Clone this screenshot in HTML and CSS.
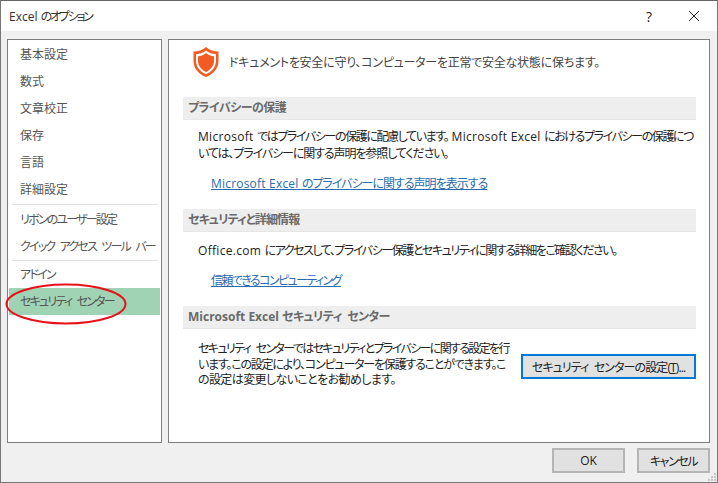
FILE: index.html
```html
<!DOCTYPE html>
<html lang="ja">
<head>
<meta charset="utf-8">
<title>Excel のオプション</title>
<link rel="stylesheet" href="styles.css">
</head>
<body>
<div class="window">
  <header class="titlebar">
    <span class="title">Excel <span class="t-ja">のオプション</span></span>
    <span class="help">?</span>
    <svg class="close" width="12" height="12" viewBox="0 0 12 12"><path d="M1 1L11 11M11 1L1 11" stroke="#222" stroke-width="1" fill="none"/></svg>
  </header>
  <main class="content">
    <nav class="sidebar">
      <div class="item">基本設定</div>
      <div class="item">数式</div>
      <div class="item">文章校正</div>
      <div class="item">保存</div>
      <div class="item">言語</div>
      <div class="item">詳細設定</div>
      <div class="sep"></div>
      <div class="item kana">リボンのユーザー設定</div>
      <div class="item kana">クイック アクセス ツール バー</div>
      <div class="sep sep-tight"></div>
      <div class="item kana">アドイン</div>
      <div class="item kana selected">セキュリティ センター</div>
    </nav>
    <section class="panel">
      <div class="intro">
        <svg class="shield" width="28" height="32" viewBox="0 0 28 32">
          <path d="M14 1C11 4 6 5.500 1.500 5.500V15C1.500 23 7.500 28.500 14 31C20.500 28.500 26.500 23 26.500 15V5.500C22 5.500 17 4 14 1Z" fill="#f25c22"/>
          <path d="M14 4.500C11.500 6.800 7.500 8 4 8.200V15C4 21.500 9 26 14 28.300C19 26 24 21.500 24 15V8.200C20.500 8 16.500 6.800 14 4.500Z" fill="#fff"/>
          <path d="M14 7C12 8.800 9 10 6 10.300V15C6 20.300 10 24 14 26C18 24 22 20.300 22 15V10.300C19 10 16 8.800 14 7Z" fill="#f25c22"/>
        </svg>
        <span class="intro-text">ドキュメントを安全に守り、コンピューターを正常で安全な状態に保ちます。</span>
      </div>
      <h2 class="heading first">プライバシーの保護</h2>
      <p class="para">Microsoft <span class="j-a">ではプライバシーの保護に配慮しています。</span> Microsoft Excel <span class="j-a">におけるプライバシーの保護につ</span><br><span class="j-b">いては、プライバシーに関する声明を参照してください。</span></p>
      <a class="link link-one" href="#">Microsoft Excel <span class="j-c">のプライバシーに関する声明を表示する</span></a>
      <h2 class="heading second">セキュリティと詳細情報</h2>
      <p class="para para-office">Office.com <span class="j-d">にアクセスして、プライバシー保護とセキュリティに関する詳細をご確認ください。</span></p>
      <a class="link link-two" href="#"><span class="j-e">信頼できるコンピューティング</span></a>
      <h2 class="heading third">Microsoft Excel <span class="j-f">セキュリティ センター</span></h2>
      <div class="trust">
        <p class="para trust-text"><span class="j-k">セキュリティ センターではセキュリティとプライバシーに関する設定を行</span><br><span class="j-g">います。この設定により、コンピューターを保護することができます。こ</span><br><span class="j-h">の設定は変更しないことをお勧めします。</span></p>
        <button class="btn trust-btn" type="button"><span class="j-i">セキュリティ センターの設定(<u>T</u>)...</span></button>
      </div>
    </section>
  </main>
  <footer class="footer">
    <button class="btn ok" type="button">OK</button>
    <button class="btn cancel" type="button"><span class="j-a">キャンセル</span></button>
  </footer>
  <svg class="grip" width="10" height="10" viewBox="0 0 10 10"><path d="M7 1h2v2H7zM4 4h2v2H4zM7 4h2v2H7zM1 7h2v2H1zM4 7h2v2H4zM7 7h2v2H7z" fill="#c4c4c4"/></svg>
  <svg class="ellipse" width="124" height="44" viewBox="0 0 124 44"><ellipse cx="62" cy="22" rx="59.500" ry="19.500" fill="none" stroke="#e8101a" stroke-width="2"/></svg>
</div>
</body>
</html>
```
FILE: styles.css
```css
* { box-sizing: border-box; }
html, body { margin: 0; padding: 0; }
body { width: 718px; height: 483px; overflow: hidden; font-family: "Open Sans", "Noto Sans CJK JP", sans-serif; font-size: 12px; color: #222; font-feature-settings: "palt"; }
.window { position: relative; width: 718px; height: 483px; background: #f0f0f0; border: 1px solid #777; border-top-color: #666; display: flex; flex-direction: column; }
.titlebar { height: 30px; background: #fff; display: flex; align-items: center; padding: 0 0 0 8px; flex: none; }
.title { flex: 1; font-size: 12px; color: #333; }
.t-ja { letter-spacing: -2.2px; }
.help { font-size: 14px; color: #222; margin-right: 36px; }
.close { margin-right: 17px; }
.content { display: flex; gap: 6px; padding: 8px 7px 0 6px; height: 412px; flex: none; }
.sidebar { width: 155px; height: 404px; background: #fff; border: 1px solid #7f7f7f; padding: 1px 1px; flex: none; }
.item { height: 27px; line-height: 27px; padding-left: 11px; color: #555; white-space: nowrap; }
.item.kana { letter-spacing: -1.8px; word-spacing: 4px; }
.item.selected { background: #9fd3b4; }
.sep { height: 1px; margin: 1px 2px 1px 3px; background: #e2e2e2; }
.sep-tight { margin: 0 2px 0 3px; }
.panel { width: 542px; height: 404px; background: #fff; border: 1px solid #7f7f7f; padding: 6px 14px 0; flex: none; }
.intro { display: flex; align-items: center; gap: 9px; height: 32px; padding-left: 9px; color: #444; white-space: nowrap; }
.intro-text { letter-spacing: -0.25px; }
.heading { margin: 0; height: 23px; line-height: 22px; padding-left: 5px; background: #eeeeee; border-bottom: 1px solid #e6e6e6; font-size: 12px; font-weight: 700; color: #6a6a6a; width: 513px; }
.heading.first { margin-top: 19px; letter-spacing: -0.55px; }
.heading.second { margin-top: 17px; letter-spacing: -0.9px; }
.heading.third { margin-top: 17px; }
.para { margin: 0; padding-left: 15px; line-height: 17px; color: #222; white-space: nowrap; letter-spacing: 0.3px; }
.heading + .para { margin-top: 8px; }
.heading + .para.para-office { margin-top: 10px; }
.link { display: block; margin-left: 28px; color: #2a6bb0; line-height: 16px; white-space: nowrap; letter-spacing: 0.2px; }
.link-one { margin-top: 14px; }
.link-two { margin-top: 14px; }
.j-a { letter-spacing: -1.4px; }
.j-b { letter-spacing: -1.1px; }
.j-c { letter-spacing: -1px; }
.j-d { letter-spacing: -1.45px; }
.j-e { letter-spacing: -1.6px; }
.j-f { letter-spacing: -0.6px; word-spacing: 3px; }
.j-g { letter-spacing: -1.2px; }
.j-h { letter-spacing: -0.6px; }
.j-i { letter-spacing: -0.9px; word-spacing: 3px; }
.j-k { letter-spacing: -1.65px; word-spacing: 4px; }
.trust { display: flex; align-items: flex-start; width: 513px; position: relative; }
.para.trust-text { margin-top: 12px; line-height: 15.500px; flex: none; width: 322px; }
.btn { font: inherit; font-feature-settings: "palt"; color: #222; background: #e1e1e1; border: 2px solid #b5b5b5; padding: 0; white-space: nowrap; }
.trust-btn { position: absolute; right: 0; top: 25px; width: 175px; height: 25px; border-color: #0078d7; }
.footer { display: flex; justify-content: flex-end; gap: 12px; padding: 5px 7px 0 0; }
.ok { width: 73px; height: 25px; }
.cancel { width: 73px; height: 25px; }
.grip { position: absolute; right: 0; bottom: 0; }
.ellipse { position: absolute; left: 3px; top: 281px; }
```
